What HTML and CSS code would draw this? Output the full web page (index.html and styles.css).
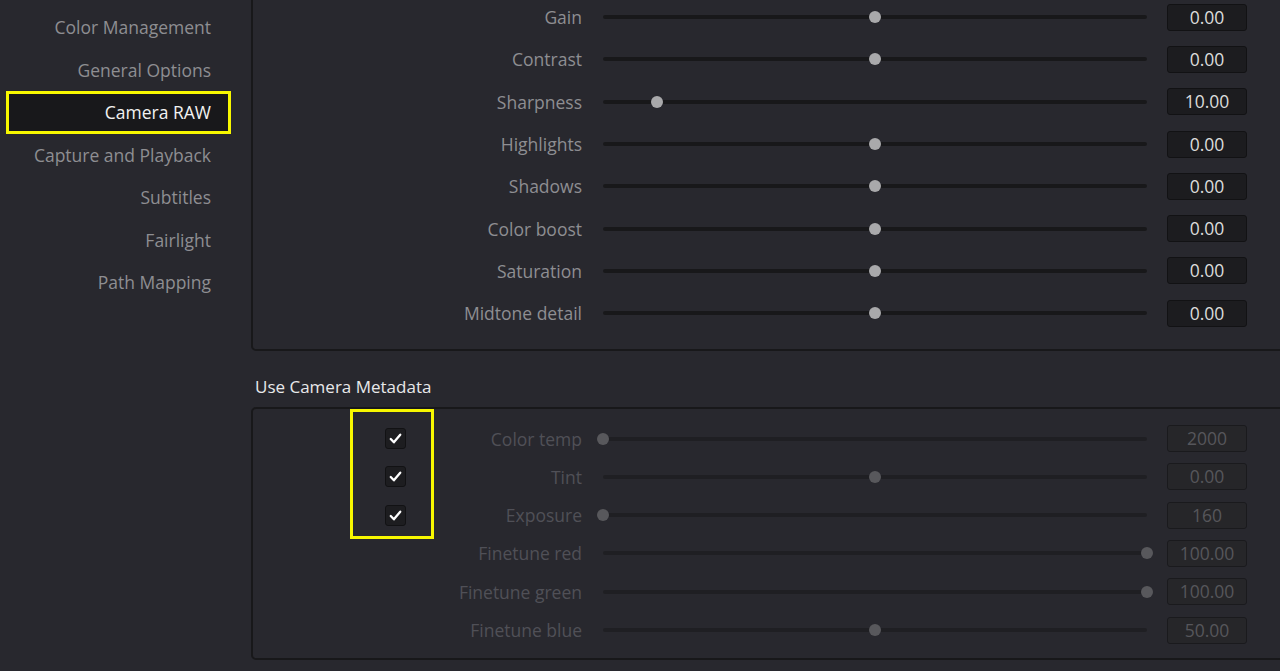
FILE: index.html
```html
<!DOCTYPE html>
<html lang="en">
<head>
  <meta charset="UTF-8"/>
  <meta name="viewport" content="width=device-width, initial-scale=1.0"/>
  <title>Preferences - Camera RAW</title>
  <link rel="stylesheet" href="styles.css">
</head>
<body>
  <div class="layout">

    <!-- Settings sections -->
    <ul class="sidebar">
      <li class="nav-item">Color Management</li>
      <li class="nav-item">General Options</li>
      <li class="nav-item active">Camera RAW</li>
      <li class="nav-item">Capture and Playback</li>
      <li class="nav-item">Subtitles</li>
      <li class="nav-item">Fairlight</li>
      <li class="nav-item">Path Mapping</li>
    </ul>

    <div class="content">

      <!-- Image adjustments -->
      <div class="panel panel-top">
        <div class="row">
          <div class="label">Gain</div>
          <div class="slider"><span class="knob" style="left: 50%"></span></div>
          <div class="value">0.00</div>
        </div>
        <div class="row">
          <div class="label">Contrast</div>
          <div class="slider"><span class="knob" style="left: 50%"></span></div>
          <div class="value">0.00</div>
        </div>
        <div class="row">
          <div class="label">Sharpness</div>
          <div class="slider"><span class="knob" style="left: 10%"></span></div>
          <div class="value">10.00</div>
        </div>
        <div class="row">
          <div class="label">Highlights</div>
          <div class="slider"><span class="knob" style="left: 50%"></span></div>
          <div class="value">0.00</div>
        </div>
        <div class="row">
          <div class="label">Shadows</div>
          <div class="slider"><span class="knob" style="left: 50%"></span></div>
          <div class="value">0.00</div>
        </div>
        <div class="row">
          <div class="label">Color boost</div>
          <div class="slider"><span class="knob" style="left: 50%"></span></div>
          <div class="value">0.00</div>
        </div>
        <div class="row">
          <div class="label">Saturation</div>
          <div class="slider"><span class="knob" style="left: 50%"></span></div>
          <div class="value">0.00</div>
        </div>
        <div class="row">
          <div class="label">Midtone detail</div>
          <div class="slider"><span class="knob" style="left: 50%"></span></div>
          <div class="value">0.00</div>
        </div>
      </div>

      <h3 class="section-title">Use Camera Metadata</h3>

      <!-- Metadata driven values (locked while checked) -->
      <div class="panel panel-meta">
        <div class="highlight"></div>

        <div class="row disabled">
          <div class="label">
            <span class="check"><svg viewBox="0 0 20 20"><path d="M5 10.5l3.3 3.5L15 6"/></svg></span>
            <span class="text">Color temp</span>
          </div>
          <div class="slider"><span class="knob" style="left: 0%"></span></div>
          <div class="value">2000</div>
        </div>
        <div class="row disabled">
          <div class="label">
            <span class="check"><svg viewBox="0 0 20 20"><path d="M5 10.5l3.3 3.5L15 6"/></svg></span>
            <span class="text">Tint</span>
          </div>
          <div class="slider"><span class="knob" style="left: 50%"></span></div>
          <div class="value">0.00</div>
        </div>
        <div class="row disabled">
          <div class="label">
            <span class="check"><svg viewBox="0 0 20 20"><path d="M5 10.5l3.3 3.5L15 6"/></svg></span>
            <span class="text">Exposure</span>
          </div>
          <div class="slider"><span class="knob" style="left: 0%"></span></div>
          <div class="value">160</div>
        </div>
        <div class="row disabled">
          <div class="label"><span class="text">Finetune red</span></div>
          <div class="slider"><span class="knob" style="left: 100%"></span></div>
          <div class="value">100.00</div>
        </div>
        <div class="row disabled">
          <div class="label"><span class="text">Finetune green</span></div>
          <div class="slider"><span class="knob" style="left: 100%"></span></div>
          <div class="value">100.00</div>
        </div>
        <div class="row disabled">
          <div class="label"><span class="text">Finetune blue</span></div>
          <div class="slider"><span class="knob" style="left: 50%"></span></div>
          <div class="value">50.00</div>
        </div>
      </div>

    </div>
  </div>
</body>
</html>
```

FILE: styles.css
```css
body {
  margin: 0;
  height: 671px;
  overflow: hidden;
  font-family: 'Open Sans', 'Noto Sans', sans-serif;
  font-size: 17.5px;
  background: #28282e;
  color: #8e8e92;
}

.layout {
  display: flex;
}

/* Sidebar */

.sidebar {
  list-style: none;
  margin: 0;
  padding: 6px 0 0 0;
  width: 251px;
  flex-shrink: 0;
}

.nav-item {
  width: 231px;
  height: 42.5px;
  box-sizing: border-box;
  padding-right: 20px;
  display: flex;
  align-items: center;
  justify-content: flex-end;
  white-space: nowrap;
}

.nav-item.active {
  background: #18181b;
  color: #f2f2f2;
  outline: 3px solid #f7f700;
  outline-offset: -3px;
  margin-left: 6px;
  width: 225px;
}

/* Panels */

.content {
  flex: 1;
  min-width: 0;
}

.panel {
  position: relative;
  width: calc(100% + 20px);
  box-sizing: border-box;
  border: 2px solid #18181a;
  border-radius: 5px;
}

.panel-top {
  margin-top: -10px;
  padding: 4px 0 15px 0;
}

.panel-meta {
  padding: 10px 0 9px 0;
}

.section-title {
  margin: 0;
  padding: 24px 0 0 4px;
  height: 32px;
  font-size: 17px;
  font-weight: normal;
  color: #e8e8ea;
}

.row {
  display: grid;
  grid-template-columns: 330px 544px 80px;
  column-gap: 20px;
  align-items: center;
  height: 42.3px;
}

.row .label {
  text-align: right;
  white-space: nowrap;
  padding-right: 1px;
}

.slider {
  position: relative;
  height: 4px;
  border-radius: 2px;
  background: #18181a;
}

.knob {
  position: absolute;
  top: 50%;
  width: 12px;
  height: 12px;
  border-radius: 50%;
  background: #a9a9ab;
  transform: translate(-50%, -50%);
}

.value {
  height: 27px;
  box-sizing: border-box;
  border: 1px solid #121214;
  border-radius: 3px;
  background: #1c1c1f;
  color: #dcdcdc;
  text-align: center;
  line-height: 25px;
}

/* Disabled rows */

.row.disabled {
  height: 38.3px;
}

.row.disabled .label {
  display: flex;
  align-items: center;
  padding-left: 132px;
}

.row.disabled .text {
  margin-left: auto;
  color: #505057;
}

.row.disabled .slider {
  background: #1f1f23;
}

.row.disabled .knob {
  background: #58585c;
}

.row.disabled .value {
  background: #262629;
  border-color: #1a1a1d;
  color: #56565b;
}

.check {
  width: 21px;
  height: 21px;
  box-sizing: border-box;
  border: 1px solid #121214;
  border-radius: 3px;
  background: #1d1d20;
  display: flex;
}

.check svg {
  width: 19px;
  height: 19px;
  fill: none;
  stroke: #ffffff;
  stroke-width: 2.4;
  stroke-linecap: round;
  stroke-linejoin: round;
}

.highlight {
  position: absolute;
  left: 97px;
  top: 0;
  width: 84px;
  height: 130px;
  box-sizing: border-box;
  border: 3px solid #f7f700;
  pointer-events: none;
}
```
